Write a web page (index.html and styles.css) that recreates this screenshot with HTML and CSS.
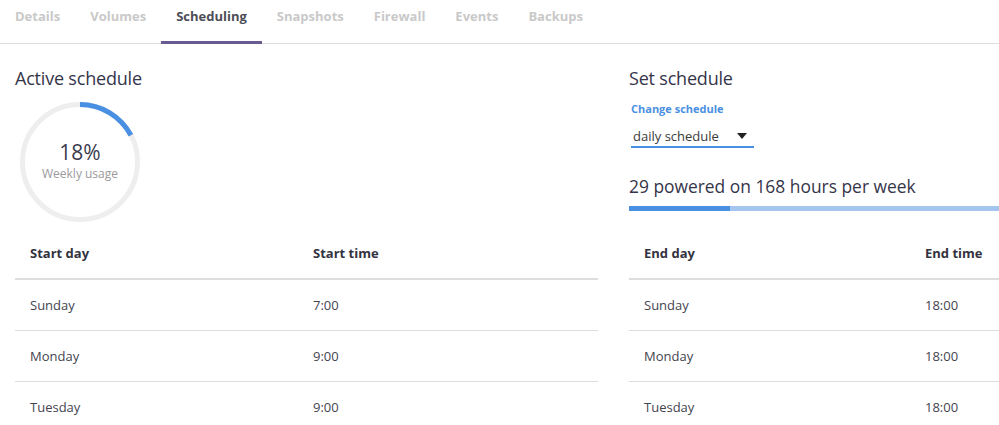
FILE: index.html
```html
<!DOCTYPE html>
<html lang="en">
<head>
<meta charset="utf-8">
<title>Scheduling</title>
<link rel="stylesheet" href="styles.css">
</head>
<body>
<nav class="tabs">
  <a class="tab">Details</a>
  <a class="tab">Volumes</a>
  <a class="tab tab-active">Scheduling</a>
  <a class="tab">Snapshots</a>
  <a class="tab">Firewall</a>
  <a class="tab">Events</a>
  <a class="tab">Backups</a>
</nav>
<main class="content">
  <section class="panel">
    <h2 class="title">Active schedule</h2>
    <div class="donut">
      <svg class="donut-svg" width="120" height="120" viewBox="0 0 120 120">
        <circle cx="60" cy="60" r="57.5" fill="none" stroke="#eeeeee" stroke-width="5"/>
        <circle cx="60" cy="60" r="57.5" fill="none" stroke="#4a90e2" stroke-width="5"
          stroke-dasharray="62.36 400" transform="rotate(-90 60 60)"/>
      </svg>
      <div class="donut-label">
        <div class="donut-value">18%</div>
        <div class="donut-caption">Weekly usage</div>
      </div>
    </div>
  </section>
  <section class="panel">
    <h2 class="title">Set schedule</h2>
    <label class="field-label">Change schedule</label>
    <div class="select">
      <span class="select-text">daily schedule</span>
      <span class="caret"></span>
    </div>
    <div class="summary">29 powered on 168 hours per week</div>
    <div class="bar"><div class="bar-fill" style="width: 17.26%"></div></div>
  </section>
  <table class="table">
    <thead>
      <tr><th class="col-first">Start day</th><th>Start time</th></tr>
    </thead>
    <tbody>
      <tr><td>Sunday</td><td>7:00</td></tr>
      <tr><td>Monday</td><td>9:00</td></tr>
      <tr><td>Tuesday</td><td>9:00</td></tr>
    </tbody>
  </table>
  <table class="table">
    <thead>
      <tr><th class="col-first col-first-end">End day</th><th>End time</th></tr>
    </thead>
    <tbody>
      <tr><td>Sunday</td><td>18:00</td></tr>
      <tr><td>Monday</td><td>18:00</td></tr>
      <tr><td>Tuesday</td><td>18:00</td></tr>
    </tbody>
  </table>
</main>
</body>
</html>
```
FILE: styles.css
```css
html, body {
  margin: 0;
  padding: 0;
  background: #ffffff;
  overflow: hidden;
}
body {
  font-family: "Open Sans", "Noto Sans", sans-serif;
  color: #3c3c4c;
  font-size: 13px;
  width: 999px;
  height: 425px;
}
.tabs {
  display: flex;
  height: 43px;
  border-bottom: 1px solid #dddddd;
}
.tab {
  display: block;
  height: 44px;
  box-sizing: border-box;
  margin-bottom: -1px;
  padding: 7px 15px 0;
  font-weight: 700;
  font-size: 13px;
  line-height: 18px;
  color: #c9c9c9;
}
.tab-active {
  color: #4d4d57;
  border-bottom: 3px solid #6a5a92;
}
.content {
  display: grid;
  grid-template-columns: 583px 583px;
  column-gap: 31px;
  padding: 0 15px;
  align-items: start;
}
.panel {
  padding-top: 22px;
}
.title {
  margin: 0;
  font-size: 18px;
  line-height: 24px;
  font-weight: 400;
  color: #35354a;
  letter-spacing: -0.2px;
}
.donut {
  position: relative;
  width: 120px;
  height: 120px;
  margin: 12px 0 0 5px;
}
.donut-svg {
  display: block;
}
.donut-label {
  position: absolute;
  inset: 0;
  display: flex;
  flex-direction: column;
  align-items: center;
  justify-content: center;
  padding-bottom: 4px;
  box-sizing: border-box;
}
.donut-value {
  font-size: 21px;
  line-height: 26px;
  color: #3c3c4e;
}
.donut-caption {
  font-size: 12px;
  line-height: 16px;
  color: #9a9a9a;
  margin-top: 1px;
}
.field-label {
  display: block;
  margin: 11px 0 0 2px;
  font-size: 11px;
  line-height: 15px;
  font-weight: 700;
  color: #4a90e2;
}
.select {
  display: flex;
  align-items: center;
  justify-content: space-between;
  width: 123px;
  box-sizing: border-box;
  margin: 9px 0 0 2px;
  padding: 2px 7px 1px 2px;
  border-bottom: 2px solid #4a90e2;
  font-size: 13px;
  line-height: 18px;
  color: #3a3a3a;
}
.caret {
  width: 0;
  height: 0;
  border-left: 5px solid transparent;
  border-right: 5px solid transparent;
  border-top: 6px solid #222222;
}
.summary {
  margin-top: 26px;
  font-size: 17.4px;
  line-height: 24px;
  color: #35354a;
}
.bar {
  margin-top: 8px;
  height: 5px;
  background: #a3c5ee;
}
.bar-fill {
  height: 100%;
  background: #4a90e2;
}
.table {
  width: 583px;
  margin-top: 6px;
  border-collapse: collapse;
}
.table th, .table td {
  text-align: left;
  padding: 16px 15px;
  line-height: 18px;
  font-size: 13px;
}
.table th {
  font-weight: 700;
  color: #33333f;
  border-bottom: 2px solid #dddddd;
}
.table td {
  color: #44444f;
  border-bottom: 1px solid #dddddd;
}
.table tbody tr:last-child td {
  border-bottom: none;
}
.col-first {
  width: 253px;
}
.col-first-end {
  width: 251px;
}
```
